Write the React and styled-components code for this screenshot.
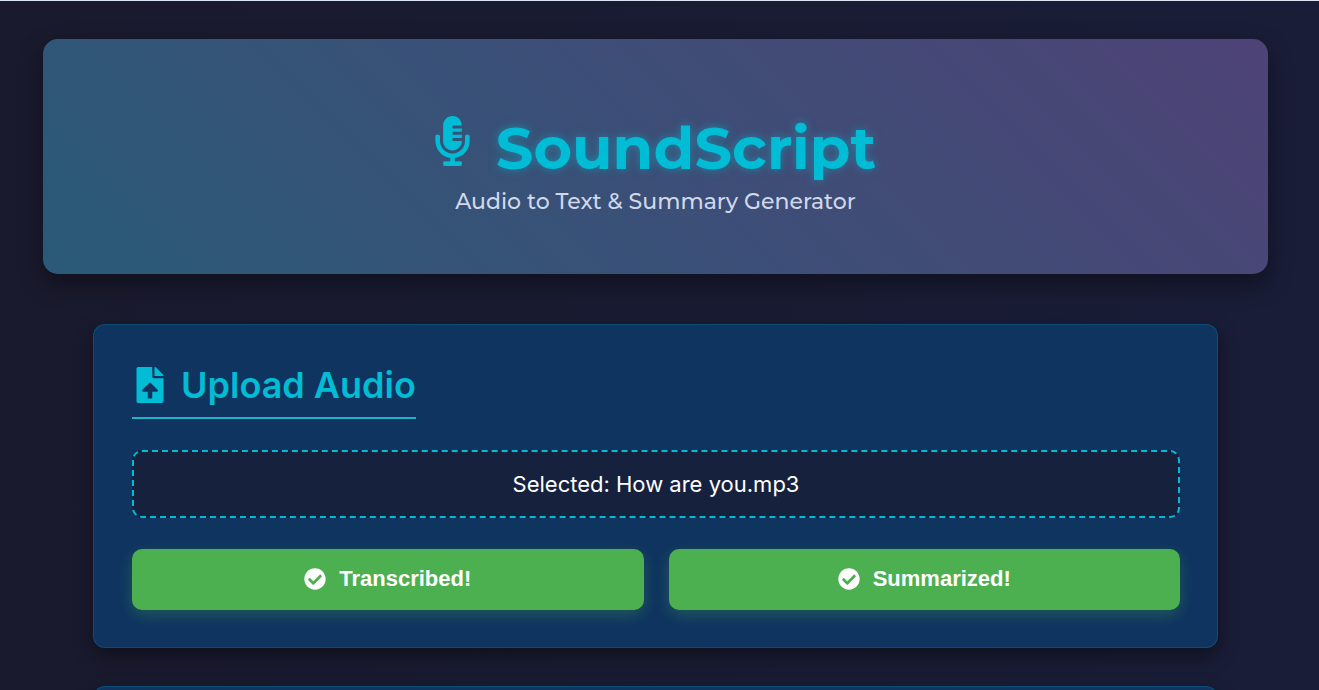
import React from 'react';
import styled, { createGlobalStyle } from 'styled-components';
import { FaMicrophoneAlt, FaFileUpload, FaCheckCircle } from 'react-icons/fa';

const GlobalStyle = createGlobalStyle`
  *, *::before, *::after { box-sizing: border-box; }
  body {
    margin: 0;
    background: #1a1a2e;
    color: #fff;
    font-family: Inter, "Liberation Sans", sans-serif;
  }
`;

const Page = styled.div`
  height: 100vh;
  overflow: hidden;
  padding: 38px 51px 0 43px;
  border-top: 1px solid #dbe4f3;
  background: linear-gradient(90deg, #1a1a2e, #191d37);
`;

const Header = styled.header`
  display: flex;
  flex-direction: column;
  align-items: center;
  padding: 71px 38px 57px;
  border-radius: 15px;
  background: linear-gradient(45deg, #2a5a78, #4e4376);
  box-shadow: 0 10px 25px rgba(0, 0, 0, 0.4);
  font-family: Montserrat, Inter, sans-serif;
`;

const Title = styled.h1`
  display: flex;
  align-items: center;
  gap: 26px;
  margin: 0;
  color: #00bcd4;
  font-size: 59px;
  font-weight: 700;
  line-height: 76px;
  text-shadow: 0 0 10px rgba(0, 188, 212, 0.5);

  svg {
    width: 35px;
    height: 50px;
    margin-bottom: 14px;
  }
`;

const Tagline = styled.p`
  margin: 0;
  color: #d0d8ea;
  font-size: 22px;
  font-weight: 500;
  line-height: 31px;
`;

const Main = styled.main`
  display: flex;
  flex-direction: column;
  gap: 38px;
  padding: 50px 50px 0;
`;

const Card = styled.section`
  min-height: 200px;
  padding: 38px 37px 37px 38px;
  border: 1px solid rgba(0, 188, 212, 0.2);
  border-radius: 12px;
  background: #0f3460;
  box-shadow: 0 8px 20px rgba(0, 0, 0, 0.4);
`;

const CardTitle = styled.h2`
  display: inline-flex;
  align-items: center;
  gap: 13px;
  margin: 0 0 31px;
  padding-bottom: 10px;
  border-bottom: 2px solid #1fb4cd;
  color: #00bcd4;
  font-size: 36px;
  font-weight: 600;
  line-height: 44px;

  svg {
    width: 36px;
    height: 36px;
  }
`;

const DropZone = styled.label`
  display: block;
  margin-bottom: 31px;
  padding: 17px;
  border: 2px dashed #00bcd4;
  border-radius: 10px;
  background: #16213e;
  font-size: 22px;
  line-height: 30px;
  text-align: center;
  cursor: pointer;
`;

const FileInput = styled.input`
  display: none;
`;

const Actions = styled.div`
  display: grid;
  grid-template-columns: 1fr 1fr;
  gap: 25px;
`;

const ActionButton = styled.button`
  display: flex;
  align-items: center;
  justify-content: center;
  gap: 13px;
  height: 61px;
  padding: 0 25px 2px;
  border: 0;
  border-radius: 10px;
  background: #4caf50;
  box-shadow: 0 5px 15px rgba(76, 175, 80, 0.3);
  color: #fff;
  font-family: "Liberation Sans", Arial, sans-serif;
  font-size: 22px;
  font-weight: 700;
  cursor: pointer;
`;

export default function App() {
  return (
    <>
      <GlobalStyle />
      <Page>
        <Header>
          <Title><FaMicrophoneAlt aria-hidden="true" />SoundScript</Title>
          <Tagline>Audio to Text &amp; Summary Generator</Tagline>
        </Header>
        <Main>
          <Card>
            <CardTitle><FaFileUpload aria-hidden="true" />Upload Audio</CardTitle>
            <DropZone htmlFor="audio-file">Selected: How are you.mp3</DropZone>
            <FileInput id="audio-file" type="file" accept="audio/*" />
            <Actions>
              <ActionButton type="button"><FaCheckCircle aria-hidden="true" />Transcribed!</ActionButton>
              <ActionButton type="button"><FaCheckCircle aria-hidden="true" />Summarized!</ActionButton>
            </Actions>
          </Card>
          <Card />
        </Main>
      </Page>
    </>
  );
}
